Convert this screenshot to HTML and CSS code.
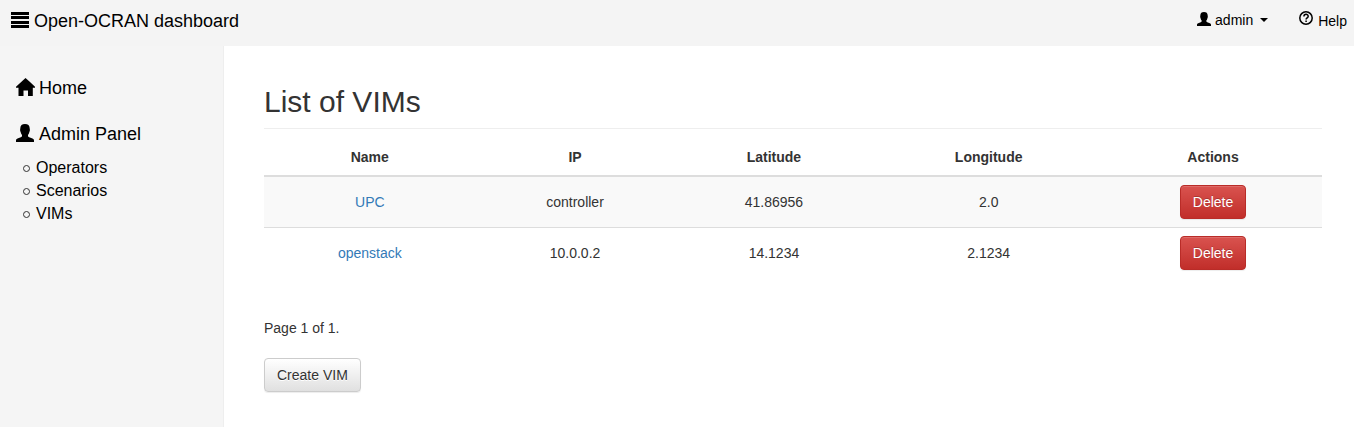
FILE: index.html
```html
<!DOCTYPE html>
<html lang="en">
<head>
<meta charset="utf-8">
<title>Open-OCRAN dashboard</title>
<link rel="stylesheet" href="styles.css">
</head>
<body>
<svg width="0" height="0" class="sprite" aria-hidden="true">
  <symbol id="user" viewBox="0 0 18 18"><path d="M9 0C6 0 4.300 1.600 4.300 4.200C4.300 5 4 5.400 4.100 6.300C4.200 7.200 4.500 7.500 4.700 8.200C4.900 9.300 5.400 10.300 6 11V12C6 12.600 5.600 12.900 4.800 13.200L1.500 14.500C.4 15 0 15.600 0 16.600V18H18V16.600C18 15.600 17.600 15 16.500 14.500L13.200 13.200C12.400 12.900 12 12.600 12 12V11C12.600 10.300 13.100 9.300 13.300 8.200C13.500 7.500 13.800 7.200 13.900 6.300C14 5.400 13.700 5 13.700 4.200C13.700 1.600 12 0 9 0Z"/></symbol>
</svg>
<header class="topbar">
  <a class="brand" href="#"><svg class="icon" viewBox="0 0 18 18" aria-hidden="true"><path d="M0 1h18v3H0zM0 5h18v3H0zM0 10h18v3H0zM0 14h18v3H0z"/></svg>Open-OCRAN dashboard</a>
  <nav class="account">
    <button class="user-menu" type="button"><svg class="icon-small" aria-hidden="true"><use href="#user"/></svg>admin<span class="caret"></span></button>
    <a class="help" href="#"><svg class="help-icon" viewBox="0 0 14 14" aria-hidden="true"><circle cx="7" cy="7" r="6.200"/><path d="M4.900 5.600C4.900 2.600 9.200 2.700 9.200 5.200C9.200 6.900 7.100 6.700 7.100 8.500M7.100 9.600V11"/></svg>Help</a>
  </nav>
</header>
<div class="layout">
  <nav class="sidebar">
    <a class="section" href="#"><svg class="icon" viewBox="0 0 18 18" aria-hidden="true"><path d="M9.500 0L14 4L19 8.800V9.800H16.800V18H12V12.500H7.500V18H2.500V9.800H0V8.800Z"/></svg>Home</a>
    <a class="section" href="#"><svg class="icon" aria-hidden="true"><use href="#user"/></svg>Admin Panel</a>
    <ul class="submenu">
      <li><a href="#">Operators</a></li>
      <li><a href="#">Scenarios</a></li>
      <li><a href="#">VIMs</a></li>
    </ul>
  </nav>
  <main class="content">
    <h1>List of VIMs</h1>
    <table class="vims">
      <colgroup><col class="col-name"><col class="col-ip"><col class="col-lat"><col class="col-long"><col class="col-actions"></colgroup>
      <thead>
        <tr><th>Name</th><th>IP</th><th>Latitude</th><th>Longitude</th><th>Actions</th></tr>
      </thead>
      <tbody>
        <tr><td><a href="#">UPC</a></td><td>controller</td><td>41.86956</td><td>2.0</td><td><button class="btn btn-danger" type="button">Delete</button></td></tr>
        <tr><td><a href="#">openstack</a></td><td>10.0.0.2</td><td>14.1234</td><td>2.1234</td><td><button class="btn btn-danger" type="button">Delete</button></td></tr>
      </tbody>
    </table>
    <p class="pager">Page 1 of 1.</p>
    <button class="btn btn-default" type="button">Create VIM</button>
  </main>
</div>
</body>
</html>
```
FILE: styles.css
```css
*,
*::before {
  box-sizing: border-box;
}

body {
  margin: 0;
  min-height: 100vh;
  display: flex;
  flex-direction: column;
  background: #fff;
  color: #333;
  font: 14px/20px "Liberation Sans", Arial, sans-serif;
}

button {
  font: inherit;
  cursor: pointer;
}

a {
  color: #337ab7;
  text-decoration: none;
}

.sprite {
  position: absolute;
}

.topbar {
  display: flex;
  justify-content: space-between;
  height: 46px;
  padding: 10px 7px 0 11px;
  background: #f4f4f4;
}

.brand,
.section {
  display: flex;
  gap: 5px;
  color: #000;
  font-size: 18px;
}

.brand {
  padding-top: 1px;
}

.icon {
  width: 18px;
  height: 18px;
  overflow: visible;
}

.account {
  display: flex;
  gap: 31px;
}

.account a,
.account button {
  display: flex;
  align-items: center;
  height: 20px;
  padding: 0;
  border: 0;
  background: none;
  color: #000;
}

.icon-small {
  width: 14px;
  height: 14px;
  margin: 0 4px 2px 0;
}

.caret {
  margin-left: 7px;
  border: 4px solid transparent;
  border-top-color: #000;
  border-bottom: 0;
}

.account .help {
  height: 22px;
}

.help-icon {
  width: 14px;
  height: 14px;
  margin: 0 5px 6px 0;
  fill: none;
  stroke: #000;
  stroke-width: 1.5;
}

.layout {
  display: flex;
  flex: 1;
}

.sidebar {
  flex: 0 0 224px;
  padding: 32px 16px;
  border-right: 1px solid #eee;
  background: #f5f5f5;
}

.section {
  margin-bottom: 26px;
}

.submenu {
  margin: -14px 0 0;
  padding-left: 7px;
  list-style: none;
  font-size: 16px;
  line-height: 23px;
}

.submenu li {
  display: flex;
  align-items: center;
  gap: 6px;
}

.submenu li::before {
  content: "";
  width: 7px;
  height: 7px;
  margin-top: 2px;
  border: 1px solid #333;
  border-radius: 50%;
}

.submenu a {
  color: #000;
}

.content {
  flex: 1;
  padding: 39px 32px 32px 40px;
}

h1 {
  margin: 0 0 10px;
  padding-bottom: 10px;
  border-bottom: 1px solid #eee;
  font-size: 30px;
  font-weight: 500;
  line-height: 33px;
}

.vims {
  width: 100%;
  margin-bottom: 40px;
  border-spacing: 0;
  border-collapse: collapse;
  text-align: center;
}

.col-name {
  width: 20%;
}

.col-ip,
.col-lat {
  width: 18.8%;
}

.col-long {
  width: 21.8%;
}

.col-actions {
  width: 20.6%;
}

.vims th,
.vims td {
  padding: 8px;
}

.vims th {
  border-bottom: 2px solid #ddd;
}

.vims td {
  border-top: 1px solid #ddd;
}

.vims tbody tr:nth-child(odd) {
  background: #f9f9f9;
}

.btn {
  display: inline-block;
  padding: 6px 12px;
  border: 1px solid;
  border-radius: 4px;
  vertical-align: middle;
  box-shadow: inset 0 1px 0 rgba(255, 255, 255, .15), 0 1px 1px rgba(0, 0, 0, .075);
}

.btn-danger {
  border-color: #b92c28;
  background: linear-gradient(#d9534f, #c12e2a);
  color: #fff;
  text-shadow: 0 -1px 0 rgba(0, 0, 0, .2);
}

.btn-default {
  border-color: #ccc;
  background: linear-gradient(#fff, #e0e0e0);
  color: #333;
  text-shadow: 0 1px 0 #fff;
}

.pager {
  margin: 0 0 20px;
}
```
